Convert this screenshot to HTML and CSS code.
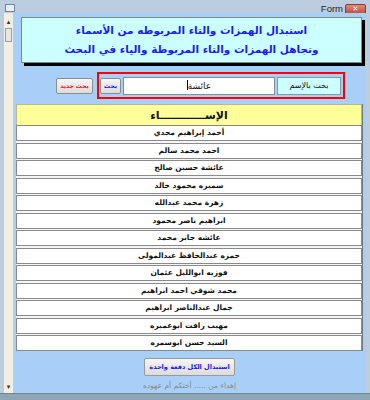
FILE: index.html
```html
<!DOCTYPE html>
<html lang="ar">
<head>
    <meta charset="UTF-8">
    <title>Form</title>
    <link rel="stylesheet" href="styles.css">
</head>
<body>
    <div class="window">
        <div class="titlebar">
            <span class="appicon"></span>
            <span class="title">Form</span>
            <span class="close">✕</span>
        </div>
        <div class="frame">
            <div class="scrollbar">
                <span class="arrow">▴</span>
                <span class="thumb"></span>
                <span class="arrow down">▾</span>
            </div>
            <div class="client" dir="rtl">
                <div class="banner">
                    <p>استبدال الهمزات والتاء المربوطه من الأسماء</p>
                    <p>وتجاهل الهمزات والتاء المربوطة والياء في البحث</p>
                </div>
                <div class="search">
                    <div class="searchbox">
                        <span class="lbl">بحث بالإسم</span>
                        <span class="field">عائشة<i class="caret"></i></span>
                        <button class="btn blue">بحث</button>
                    </div>
                    <button class="btn red">بحث جديد</button>
                </div>
                <div class="list">
                    <div class="head">الإســــــــــــاء</div>
                    <div class="rows">
                        <div class="row">أحمد إبراهيم مجدي</div>
                        <div class="row">احمد محمد سالم</div>
                        <div class="row">عائشة حسين صالح</div>
                        <div class="row">سميره محمود خالد</div>
                        <div class="row">زهرة محمد عبدالله</div>
                        <div class="row">ابراهيم ناصر محمود</div>
                        <div class="row">عائشه جابر محمد</div>
                        <div class="row">حمزه عبدالحافظ عبدالمولى</div>
                        <div class="row">فوزيه ابوالليل عثمان</div>
                        <div class="row">محمد شوقي احمد ابراهيم</div>
                        <div class="row">جمال عبدالناصر ابراهيم</div>
                        <div class="row">مهيب رافت ابوعميره</div>
                        <div class="row">السيد حسن ابوسمره</div>
                    </div>
                </div>
                <div class="footer">
                    <button class="btn big">استبدال الكل دفعة واحدة</button>
                    <p class="credit">إهداء من ..... أختكم أم عهوده</p>
                </div>
            </div>
        </div>
        <div class="bottomframe"></div>
    </div>
</body>
</html>
```

FILE: styles.css
```css
body{
    margin: 0;
    padding: 0;
    font-family: "DejaVu Sans", sans-serif;
}
p{
    margin: 0;
}
.window{
    width: 370px;
    height: 400px;
    display: flex;
    flex-direction: column;
    background: #bccddf;
    overflow: hidden;
}
.titlebar{
    height: 13px;
    display: flex;
    align-items: flex-start;
}
.appicon{
    width: 8px;
    height: 6px;
    margin: 4px 0 0 5px;
    background: #e8eef6;
    border: 1px solid #6d86a3;
}
.title{
    margin-left: auto;
    margin-top: 3px;
    font-family: "Liberation Sans", sans-serif;
    font-size: 9.5px;
    color: #222;
}
.close{
    width: 19px;
    height: 9px;
    margin: 4px 4px 0 2px;
    background: linear-gradient(#e08a7c, #c4483a);
    border: 1px solid #8a3b33;
    border-radius: 2px;
    color: #fff;
    font-size: 7px;
    line-height: 9px;
    text-align: center;
}
.frame{
    flex: 1;
    display: flex;
    padding: 0 4px 0 4px;
}
.scrollbar{
    width: 9px;
    background: #f1efe4;
    display: flex;
    flex-direction: column;
    align-items: center;
}
.arrow{
    font-size: 7px;
    line-height: 10px;
    color: #333;
    margin-top: 4px;
}
.arrow.down{
    margin-top: auto;
    margin-bottom: 1px;
}
.thumb{
    width: 7px;
    height: 14px;
    margin-top: 1px;
    background: #e6e6e2;
    border: 1px solid #9c9c9c;
    box-sizing: border-box;
}
.client{
    flex: 1;
    background: #a8cff8;
    display: flex;
    flex-direction: column;
    padding: 4px 3px 0 3px;
}
.banner{
    height: 46px;
    margin-left: 5px;
    margin-right: 1px;
    background: #ccffff;
    border: 1px solid #7a8a8a;
    box-shadow: 3px 3px 0 #000;
    box-sizing: border-box;
    color: #1c1cf0;
    font-weight: bold;
    font-size: 10.5px;
    text-align: center;
    line-height: 19px;
    padding-top: 3px;
}
.search{
    display: flex;
    align-items: center;
    margin-top: 9px;
    margin-right: 18px;
    gap: 4px;
}
.searchbox{
    display: flex;
    align-items: center;
    gap: 2px;
    width: 248px;
    height: 27px;
    box-sizing: border-box;
    border: 2px solid #ff0000;
    padding: 0 2px 0 1px;
}
.lbl{
    width: 64px;
    height: 18px;
    box-sizing: border-box;
    background: #ccffff;
    border: 1px solid #8a9a9a;
    font-size: 8px;
    line-height: 16px;
    text-align: center;
    color: #111;
}
.field{
    flex: 1;
    height: 18px;
    box-sizing: border-box;
    background: #fff;
    border: 1px solid #8c8c8c;
    font-size: 9px;
    line-height: 16px;
    text-align: center;
    color: #111;
}
.caret{
    display: inline-block;
    width: 1px;
    height: 10px;
    background: #000;
    vertical-align: -1px;
}
.btn{
    font-family: "DejaVu Sans", sans-serif;
    font-weight: bold;
    font-size: 6px;
    height: 16px;
    padding: 0;
    white-space: nowrap;
    border: 1px solid #8d8d8d;
    border-radius: 2px;
    background: linear-gradient(#f6f6f6, #dcdcdc);
}
.btn.blue{
    width: 21px;
    color: #1010ff;
}
.btn.red{
    width: 37px;
    color: #ff1010;
}
.list{
    margin-top: 5px;
    background: #f6f6f6;
    border-right: 1px solid #777;
}
.head{
    height: 21px;
    background: #ffff99;
    border: 1px solid #b9b98a;
    border-bottom: 0;
    box-sizing: border-box;
    font-weight: bold;
    font-size: 11px;
    line-height: 21px;
    text-align: center;
    color: #111;
}
.rows{
    display: flex;
    flex-direction: column;
    gap: 1.5px;
}
.row{
    height: 16px;
    box-sizing: border-box;
    background: #fff;
    border: 1px solid #8a8a8a;
    font-weight: bold;
    font-size: 7.5px;
    line-height: 14px;
    text-align: center;
    color: #111;
}
.footer{
    flex: 1;
    display: flex;
    flex-direction: column;
    align-items: center;
}
.btn.big{
    margin-top: 7px;
    width: 91px;
    height: 18px;
    color: #1c1cf0;
    font-size: 6.5px;
    border-color: #9a9a9a;
}
.credit{
    margin-top: 5px;
    font-size: 7.5px;
    color: #8a8a8a;
    letter-spacing: 0.5px;
}
.bottomframe{
    height: 6px;
    background: #8fa7b4;
    border-top: 1px solid #6a8a94;
}
```
